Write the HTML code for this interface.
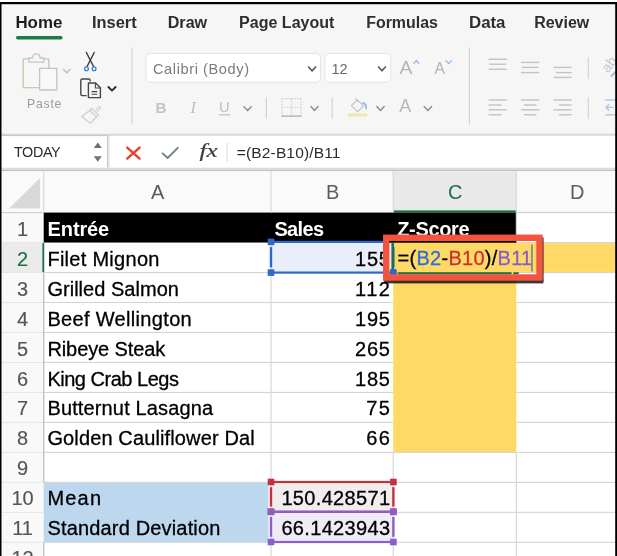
<!DOCTYPE html>
<html lang="en"><head><meta charset="utf-8"><title>Excel Z-Score</title>
<style>
html,body{margin:0;padding:0;background:#fff;}
body{width:617px;height:556px;overflow:hidden;position:relative;font-family:"Liberation Sans",sans-serif;}
svg{position:absolute;left:0;top:0;display:block;will-change:transform;}
text{font-family:"Liberation Sans",sans-serif;}
.cell{font-size:20px;fill:#000;stroke:#000;stroke-width:0.3px;}
.hdr{font-size:20px;fill:#5c5c5c;text-anchor:middle;}
.tab{font-size:15.6px;font-weight:700;fill:#2a2a2a;}
.serif{font-family:"Liberation Serif",serif;}
</style></head><body>
<svg width="617" height="556" viewBox="0 0 617 556">
<defs><filter id="sh" x="-10%" y="-20%" width="120%" height="150%"><feGaussianBlur stdDeviation="0.7"/></filter>
<filter id="soft" filterUnits="userSpaceOnUse" x="-10" y="-10" width="637" height="576"><feGaussianBlur stdDeviation="0.32"/></filter></defs>
<g filter="url(#soft)">
<rect x="-8" y="-8" width="633" height="572" fill="#fff"/>
<rect x="0" y="4" width="617" height="130" fill="#f6f6f6"/>
<rect x="0" y="133.7" width="617" height="2.3" fill="#dbdad8"/>
<rect x="0" y="135.8" width="617" height="32" fill="#fff"/>
<rect x="0" y="167.7" width="617" height="2.2" fill="#dcdcdc"/>
<rect x="0" y="169.9" width="617" height="1.5" fill="#c2c2c2"/>
<rect x="0" y="171.2" width="617" height="41.35000000000002" fill="#fafafa"/>
<rect x="0" y="212.55" width="43.7" height="343.45" fill="#f9f9f9"/>
<rect x="393.2" y="171.2" width="123.09999999999997" height="41.35000000000002" fill="#e9e9e9"/>
<rect x="393.2" y="210.4" width="123.09999999999997" height="2.2" fill="#1e7145"/>
<rect x="0" y="242.53" width="43.7" height="29.98" fill="#ebebeb"/>
<rect x="42.4" y="242.53" width="1.8" height="29.98" fill="#1e7145"/>
<rect x="43.7" y="212.55" width="472.59999999999997" height="29.98" fill="#000"/>
<rect x="393.2" y="242.53" width="123.09999999999997" height="209.86" fill="#ffd966"/>
<rect x="393.2" y="243.13" width="223.8" height="28.78" fill="#ffd966"/>
<rect x="43.7" y="482.37" width="224.8" height="59.96" fill="#bdd7ee"/>
<rect x="271.0" y="242.53" width="122.19999999999999" height="29.98" fill="#e9effa"/>
<rect x="271.0" y="482.37" width="122.19999999999999" height="29.98" fill="#f1eded"/>
<rect x="271.0" y="512.35" width="122.19999999999999" height="29.98" fill="#efecf5"/>
<rect x="43.1" y="171.2" width="1.2" height="41.35000000000002" fill="#dadada"/>
<rect x="270.4" y="171.2" width="1.2" height="41.35000000000002" fill="#dadada"/>
<rect x="392.59999999999997" y="171.2" width="1.2" height="41.35000000000002" fill="#dadada"/>
<rect x="515.6999999999999" y="171.2" width="1.2" height="41.35000000000002" fill="#dadada"/>
<rect x="0" y="212.05" width="43.7" height="1" fill="#e6e6e6"/>
<rect x="0" y="242.03" width="43.7" height="1" fill="#e6e6e6"/>
<rect x="0" y="272.01" width="43.7" height="1" fill="#e6e6e6"/>
<rect x="0" y="301.99" width="43.7" height="1" fill="#e6e6e6"/>
<rect x="0" y="331.97" width="43.7" height="1" fill="#e6e6e6"/>
<rect x="0" y="361.95000000000005" width="43.7" height="1" fill="#e6e6e6"/>
<rect x="0" y="391.93" width="43.7" height="1" fill="#e6e6e6"/>
<rect x="0" y="421.91" width="43.7" height="1" fill="#e6e6e6"/>
<rect x="0" y="451.89" width="43.7" height="1" fill="#e6e6e6"/>
<rect x="0" y="481.87" width="43.7" height="1" fill="#e6e6e6"/>
<rect x="0" y="511.85" width="43.7" height="1" fill="#e6e6e6"/>
<rect x="0" y="541.83" width="43.7" height="1" fill="#e6e6e6"/>
<rect x="0" y="211.95000000000002" width="43.7" height="1.2" fill="#d0d0d0"/>
<rect x="516.3" y="211.95000000000002" width="100.70000000000005" height="1.2" fill="#d0d0d0"/>
<rect x="43.7" y="271.96" width="349.5" height="1.1" fill="#d4d4d4"/>
<rect x="516.3" y="271.96" width="100.70000000000005" height="1.1" fill="#d4d4d4"/>
<rect x="43.7" y="301.94" width="349.5" height="1.1" fill="#d4d4d4"/>
<rect x="516.3" y="301.94" width="100.70000000000005" height="1.1" fill="#d4d4d4"/>
<rect x="43.7" y="331.92" width="349.5" height="1.1" fill="#d4d4d4"/>
<rect x="516.3" y="331.92" width="100.70000000000005" height="1.1" fill="#d4d4d4"/>
<rect x="43.7" y="361.90000000000003" width="349.5" height="1.1" fill="#d4d4d4"/>
<rect x="516.3" y="361.90000000000003" width="100.70000000000005" height="1.1" fill="#d4d4d4"/>
<rect x="43.7" y="391.88" width="349.5" height="1.1" fill="#d4d4d4"/>
<rect x="516.3" y="391.88" width="100.70000000000005" height="1.1" fill="#d4d4d4"/>
<rect x="43.7" y="421.86" width="349.5" height="1.1" fill="#d4d4d4"/>
<rect x="516.3" y="421.86" width="100.70000000000005" height="1.1" fill="#d4d4d4"/>
<rect x="43.7" y="451.84" width="349.5" height="1.1" fill="#d4d4d4"/>
<rect x="393.2" y="451.84" width="123.09999999999997" height="1.1" fill="#d4d4d4"/>
<rect x="516.3" y="451.84" width="100.70000000000005" height="1.1" fill="#d4d4d4"/>
<rect x="43.7" y="481.82" width="349.5" height="1.1" fill="#d4d4d4"/>
<rect x="393.2" y="481.82" width="123.09999999999997" height="1.1" fill="#d4d4d4"/>
<rect x="516.3" y="481.82" width="100.70000000000005" height="1.1" fill="#d4d4d4"/>
<rect x="271.0" y="511.8" width="122.19999999999999" height="1.1" fill="#d4d4d4"/>
<rect x="393.2" y="511.8" width="123.09999999999997" height="1.1" fill="#d4d4d4"/>
<rect x="516.3" y="511.8" width="100.70000000000005" height="1.1" fill="#d4d4d4"/>
<rect x="43.7" y="541.7800000000001" width="349.5" height="1.1" fill="#d4d4d4"/>
<rect x="393.2" y="541.7800000000001" width="123.09999999999997" height="1.1" fill="#d4d4d4"/>
<rect x="516.3" y="541.7800000000001" width="100.70000000000005" height="1.1" fill="#d4d4d4"/>
<rect x="516.3" y="241.98" width="100.70000000000005" height="1.1" fill="#d4d4d4"/>
<rect x="43.0" y="272.51" width="1.4" height="209.86" fill="#c2c2c2"/>
<rect x="43.0" y="542.33" width="1.4" height="20" fill="#c2c2c2"/>
<rect x="270.45" y="242.53" width="1.1" height="329.78" fill="#d4d4d4"/>
<rect x="392.65" y="452.39" width="1.1" height="119.91999999999996" fill="#d4d4d4"/>
<rect x="515.75" y="212.55" width="1.1" height="29.97999999999999" fill="#d4d4d4"/>
<rect x="515.75" y="452.39" width="1.1" height="119.91999999999996" fill="#d4d4d4"/>
<text class="tab" x="15.4" y="28.2" textLength="47.0" lengthAdjust="spacingAndGlyphs" style="fill:#1f1f1f">Home</text>
<text class="tab" x="92.0" y="28.2" textLength="44.699999999999996" lengthAdjust="spacingAndGlyphs" style="fill:#2e2e2e">Insert</text>
<text class="tab" x="167.70000000000002" y="28.2" textLength="39.49999999999998" lengthAdjust="spacingAndGlyphs" style="fill:#2e2e2e">Draw</text>
<text class="tab" x="239.1" y="28.2" textLength="95.29999999999998" lengthAdjust="spacingAndGlyphs" style="fill:#2e2e2e">Page Layout</text>
<text class="tab" x="366.2" y="28.2" textLength="71.69999999999996" lengthAdjust="spacingAndGlyphs" style="fill:#2e2e2e">Formulas</text>
<text class="tab" x="469.0" y="28.2" textLength="36.49999999999998" lengthAdjust="spacingAndGlyphs" style="fill:#2e2e2e">Data</text>
<text class="tab" x="534.1999999999999" y="28.2" textLength="55.1" lengthAdjust="spacingAndGlyphs" style="fill:#2e2e2e">Review</text>
<rect x="16" y="36" width="46.6" height="3.6" rx="1.8" fill="#1f7a48"/>
<g fill="none" stroke="#c4c4c4" stroke-width="1.3" stroke-linejoin="round">
<path d="M28.6 58.8 H23.2 V87.6 H39.4"/>
<path d="M44 58.8 H48.8 V68"/>
<path d="M28.8 62.2 V58 H32.6 C32.6 52.6 40 52.6 40 58 H43.8 V62.2 Z"/>
<rect x="39.6" y="68.4" width="17.2" height="21.6" fill="#f8f8f8"/>
</g>
<path d="M23.2 62 V87.6 H37" fill="none" stroke="#f3d46a" stroke-width="1.2" stroke-dasharray="1.2 2.6" opacity="0.9"/>
<path d="M63.6 69.4 L66.8 72.8 L70 69.4" fill="none" stroke="#bdbdbd" stroke-width="1.4" stroke-linecap="round" stroke-linejoin="round"/>
<text x="27" y="108" font-size="12.2" fill="#9b9b9b" textLength="34.4" lengthAdjust="spacing">Paste</text>
<g fill="none" stroke="#3c3c3c" stroke-width="1.3" stroke-linecap="round"><path d="M86.3 52.4 L93.6 66.6"/><path d="M94.3 52.4 L87 66.6"/></g>
<g fill="none" stroke="#3b7ddd" stroke-width="1.3"><circle cx="86.5" cy="68.7" r="1.9"/><circle cx="94.1" cy="68.7" r="1.9"/></g>
<g fill="none" stroke="#454545" stroke-width="1.4" stroke-linejoin="round">
<path d="M86.6 95.6 H82.4 Q80.8 95.6 80.8 94 V80.6 Q80.8 79 82.4 79 H88.6 Q90.2 79 90.2 80.6 V81.4"/>
<path d="M88.4 83 H95.6 L100.4 87.8 V97.6 H88.4 Z" fill="#f5f5f5"/>
<path d="M95.4 83.2 V88 H100.2" stroke-width="1.1"/>
<path d="M91.6 91.6 H97.2 M91.6 94.2 H97.2" stroke-width="1.1"/>
</g>
<path d="M108.4 87 L112 90.6 L115.6 87" fill="none" stroke="#2e2e2e" stroke-width="1.9" stroke-linecap="round" stroke-linejoin="round"/>
<g fill="none" stroke="#cfcfcf" stroke-width="1.2" stroke-linejoin="round">
<path d="M95.6 110.2 L99.2 106.4 L100.6 107.8 L97 111.6"/>
<path d="M91.4 108.4 L98.4 115 L96.6 117 L89.6 110.4 Z"/>
<path d="M89.6 110.6 L81.6 116.4 L90.4 123.2 L96.4 117"/>
</g>
<circle cx="83.2" cy="117" r="0.8" fill="#f3d46a"/><circle cx="93" cy="119.6" r="0.8" fill="#f3d46a"/>
<rect x="131.5" y="47.5" width="1.2" height="77" fill="#d4d4d4"/>
<rect x="468.8" y="47.5" width="1.2" height="77" fill="#d4d4d4"/>
<rect x="265.8" y="97.4" width="1.2" height="21.4" fill="#d4d4d4"/>
<rect x="331.6" y="97.8" width="1.2" height="20.8" fill="#d4d4d4"/>
<rect x="587.7" y="57.2" width="1.2" height="22" fill="#d4d4d4"/>
<rect x="587.7" y="97.2" width="1.2" height="22" fill="#d4d4d4"/>
<rect x="146" y="53.4" width="174.6" height="28.8" rx="4.5" fill="#fff" stroke="#e3e3e3" stroke-width="1"/>
<rect x="324.8" y="53.4" width="66" height="28.8" rx="4.5" fill="#fff" stroke="#e3e3e3" stroke-width="1"/>
<text x="153" y="74" font-size="14.6" fill="#7b7b7b" textLength="96" lengthAdjust="spacing">Calibri (Body)</text>
<text x="331.6" y="74" font-size="14.6" fill="#6a6a6a" textLength="16" lengthAdjust="spacing">12</text>
<path d="M308.6 67 L312.1 70.8 L315.6 67" fill="none" stroke="#5f5f5f" stroke-width="1.7" stroke-linecap="round" stroke-linejoin="round"/>
<path d="M378.6 67 L382.0 70.8 L385.4 67" fill="none" stroke="#5f5f5f" stroke-width="1.7" stroke-linecap="round" stroke-linejoin="round"/>
<text x="399.6" y="73.9" font-size="19.2" fill="#b3b3b3">A</text>
<text x="434.4" y="73.9" font-size="15.6" fill="#b3b3b3">A</text>
<path d="M414 63.4 L416.4 60.4 L418.8 63.4" fill="none" stroke="#8cb8ee" stroke-width="1.3" stroke-linecap="round" stroke-linejoin="round"/>
<path d="M446 60.6 L448.7 63.6 L451.4 60.6" fill="none" stroke="#8cb8ee" stroke-width="1.3" stroke-linecap="round" stroke-linejoin="round"/>
<text x="155.6" y="112.7" font-size="15.2" font-weight="700" fill="#c2c2c2">B</text>
<text class="serif" x="190.4" y="112.7" font-size="16" font-style="italic" fill="#bdbdbd">I</text>
<text x="219" y="112.2" font-size="14.6" fill="#bdbdbd">U</text>
<rect x="219.2" y="114.2" width="11" height="1.2" fill="#bdbdbd"/>
<path d="M244 106.8 L247.6 110.6 L251.2 106.8" fill="none" stroke="#8f8f8f" stroke-width="1.5" stroke-linecap="round" stroke-linejoin="round"/>
<g fill="none" stroke="#c6c6c6" stroke-width="1.1" stroke-dasharray="1.1 1.5">
<path d="M282 98.6 H301 M282 98.6 V116 M301 98.6 V116 M291.5 98.6 V116 M282 107.2 H301"/>
</g>
<rect x="281.4" y="115.4" width="20.2" height="1.5" fill="#b9b9b9"/>
<path d="M311 106.6 L314.5 110.4 L318 106.6" fill="none" stroke="#8f8f8f" stroke-width="1.5" stroke-linecap="round" stroke-linejoin="round"/>
<g fill="none" stroke="#c2c2c2" stroke-width="1.2" stroke-linejoin="round">
<path d="M357.4 99.8 L363.6 106 L357.6 111.6 L351.4 105.6 Z"/>
<path d="M355.2 98.6 L358.6 102"/>
</g>
<path d="M363 103 C365.6 103.6 366.4 106 366 108.6" fill="none" stroke="#7fb0ea" stroke-width="1.5" stroke-linecap="round"/>
<path d="M348.4 115 H367.6" stroke="#f3d46a" stroke-width="3" stroke-dasharray="1.6 0.8" opacity="0.75" fill="none"/>
<path d="M376.8 106.6 L380.5 110.4 L384.2 106.6" fill="none" stroke="#8f8f8f" stroke-width="1.5" stroke-linecap="round" stroke-linejoin="round"/>
<text x="399.2" y="111.8" font-size="18" fill="#b9b9b9">A</text>
<path d="M424.2 106.6 L427.9 110.4 L431.6 106.6" fill="none" stroke="#8f8f8f" stroke-width="1.5" stroke-linecap="round" stroke-linejoin="round"/>
<rect x="488.6" y="58.5" width="18.19999999999999" height="1.4" fill="#c3c3c3"/>
<rect x="489.4" y="63.5" width="16.600000000000023" height="1.4" fill="#c3c3c3"/>
<rect x="488.6" y="68.5" width="18.19999999999999" height="1.4" fill="#c3c3c3"/>
<rect x="521" y="61.699999999999996" width="18.399999999999977" height="1.4" fill="#c3c3c3"/>
<rect x="522" y="66.7" width="16.399999999999977" height="1.4" fill="#c3c3c3"/>
<rect x="521" y="71.89999999999999" width="18.399999999999977" height="1.4" fill="#c3c3c3"/>
<rect x="553.6" y="66.7" width="18.0" height="1.4" fill="#c3c3c3"/>
<rect x="556" y="71.89999999999999" width="15.600000000000023" height="1.4" fill="#c3c3c3"/>
<rect x="553.6" y="76.7" width="18.0" height="1.4" fill="#c3c3c3"/>
<rect x="488.6" y="99.3" width="18.19999999999999" height="1.4" fill="#c3c3c3"/>
<rect x="488.6" y="104.3" width="13.0" height="1.4" fill="#c3c3c3"/>
<rect x="488.6" y="109.1" width="18.19999999999999" height="1.4" fill="#c3c3c3"/>
<rect x="488.6" y="114.1" width="13.0" height="1.4" fill="#c3c3c3"/>
<rect x="521" y="99.3" width="18.399999999999977" height="1.4" fill="#c3c3c3"/>
<rect x="524" y="104.3" width="12.399999999999977" height="1.4" fill="#c3c3c3"/>
<rect x="521" y="109.1" width="18.399999999999977" height="1.4" fill="#c3c3c3"/>
<rect x="524" y="114.1" width="12.399999999999977" height="1.4" fill="#c3c3c3"/>
<rect x="553.6" y="99.3" width="18.0" height="1.4" fill="#c3c3c3"/>
<rect x="558.8" y="104.3" width="12.800000000000068" height="1.4" fill="#c3c3c3"/>
<rect x="553.6" y="109.1" width="18.0" height="1.4" fill="#c3c3c3"/>
<rect x="558.8" y="114.1" width="12.800000000000068" height="1.4" fill="#c3c3c3"/>
<text x="0" y="0" font-size="14" fill="#c6c6c6" transform="translate(608,73.5) rotate(-52)">ab</text>
<path d="M611 76.6 L616 71.2" stroke="#8cb8ee" stroke-width="1.6" fill="none"/>
<rect x="605.2" y="99.3" width="12" height="1.4" fill="#c3c3c3"/><rect x="605.2" y="114.1" width="12" height="1.4" fill="#c3c3c3"/>
<path d="M613 107.4 H606 M608.8 104.6 L606 107.4 L608.8 110.2" stroke="#a5c9f0" stroke-width="1.4" fill="none" stroke-linecap="round" stroke-linejoin="round"/>
<rect x="1.5" y="134.7" width="107.2" height="1.4" fill="#cbcbcb"/>
<rect x="106.9" y="135.8" width="1.8" height="32" fill="#cdcdcd"/>
<rect x="108.7" y="135.8" width="1.6" height="32" fill="#f0f0f0"/>
<text x="14" y="156.5" font-size="14.4" fill="#2b2b2b" textLength="46.6" lengthAdjust="spacing">TODAY</text>
<path d="M93.8 148 L97.8 142.4 L101.8 148 Z M93.8 156.2 L97.8 161.8 L101.8 156.2 Z" fill="#6f6f6f"/>
<path d="M127.2 147.6 L139.6 158.6 M139.6 147.6 L127.2 158.6" stroke="#e8412f" stroke-width="2.4" fill="none" stroke-linecap="round"/>
<path d="M162.6 153.4 L167.6 158 L177.8 147.8" stroke="#6b8577" stroke-width="1.8" fill="none" stroke-linecap="round" stroke-linejoin="round"/>
<text class="serif" x="199.6" y="157.2" font-size="19" font-style="italic" fill="#3a3a3a" stroke="#3a3a3a" stroke-width="0.2" textLength="18" lengthAdjust="spacingAndGlyphs">fx</text>
<rect x="226.4" y="143" width="1.2" height="18.4" fill="#dcdcdc"/>
<text x="236.8" y="158.3" font-size="15.5" fill="#2b2b2b" textLength="103.6" lengthAdjust="spacing">=(B2-B10)/B11</text>
<path d="M9 208.6 L40 208.6 L40 178 Z" fill="#d9d9d9"/>
<text class="hdr" x="157.6" y="199.2">A</text>
<text class="hdr" x="332.6" y="199.2">B</text>
<text class="hdr" x="577.2" y="199.2">D</text>
<text class="hdr" x="455.2" y="199.2" fill="#1e7145" style="fill:#1e7145">C</text>
<text x="22.6" y="235.60" font-size="20" text-anchor="middle" style="fill:#555;stroke:#555;stroke-width:0.15px">1</text>
<text x="22.6" y="265.58" font-size="20" text-anchor="middle" style="fill:#1e7145;stroke:#1e7145;stroke-width:0.15px">2</text>
<text x="22.6" y="295.56" font-size="20" text-anchor="middle" style="fill:#555;stroke:#555;stroke-width:0.15px">3</text>
<text x="22.6" y="325.54" font-size="20" text-anchor="middle" style="fill:#555;stroke:#555;stroke-width:0.15px">4</text>
<text x="22.6" y="355.52" font-size="20" text-anchor="middle" style="fill:#555;stroke:#555;stroke-width:0.15px">5</text>
<text x="22.6" y="385.50" font-size="20" text-anchor="middle" style="fill:#555;stroke:#555;stroke-width:0.15px">6</text>
<text x="22.6" y="415.48" font-size="20" text-anchor="middle" style="fill:#555;stroke:#555;stroke-width:0.15px">7</text>
<text x="22.6" y="445.46" font-size="20" text-anchor="middle" style="fill:#555;stroke:#555;stroke-width:0.15px">8</text>
<text x="22.6" y="475.44" font-size="20" text-anchor="middle" style="fill:#555;stroke:#555;stroke-width:0.15px">9</text>
<text x="22.6" y="505.42" font-size="20" text-anchor="middle" style="fill:#555;stroke:#555;stroke-width:0.15px">10</text>
<text x="22.6" y="535.40" font-size="20" text-anchor="middle" style="fill:#555;stroke:#555;stroke-width:0.15px">11</text>
<text x="22.6" y="565.38" font-size="20" text-anchor="middle" style="fill:#555;stroke:#555;stroke-width:0.15px">12</text>
<text class="cell" x="47.6" y="235.60" font-weight="700" style="fill:#fff;stroke:none" textLength="61.6" lengthAdjust="spacing">Entrée</text>
<text class="cell" x="274.4" y="235.60" font-weight="700" style="fill:#fff;stroke:none" textLength="49.6" lengthAdjust="spacing">Sales</text>
<text class="cell" x="397.2" y="235.60" font-weight="700" style="fill:#fff;stroke:none" textLength="72.4" lengthAdjust="spacing">Z-Score</text>
<text class="cell" x="47.4" y="265.58" textLength="112.0" lengthAdjust="spacing">Filet Mignon</text>
<text class="cell" x="47.4" y="295.56" textLength="131.5" lengthAdjust="spacing">Grilled Salmon</text>
<text class="cell" x="47.4" y="325.54" textLength="144.3" lengthAdjust="spacing">Beef Wellington</text>
<text class="cell" x="47.4" y="355.52" textLength="117.9" lengthAdjust="spacing">Ribeye Steak</text>
<text class="cell" x="47.4" y="385.50" textLength="131.5" lengthAdjust="spacing">King Crab Legs</text>
<text class="cell" x="47.4" y="415.48" textLength="165.7" lengthAdjust="spacing">Butternut Lasagna</text>
<text class="cell" x="47.4" y="445.46" textLength="207.3" lengthAdjust="spacing">Golden Cauliflower Dal</text>
<text class="cell" x="47.4" y="505.42" textLength="53.6" lengthAdjust="spacing">Mean</text>
<text class="cell" x="47.4" y="535.40" textLength="173" lengthAdjust="spacing">Standard Deviation</text>
<text class="cell" x="355.1" y="265.58" textLength="34.8" lengthAdjust="spacing">155</text>
<text class="cell" x="355.1" y="295.56" textLength="34.8" lengthAdjust="spacing">112</text>
<text class="cell" x="355.1" y="325.54" textLength="34.8" lengthAdjust="spacing">195</text>
<text class="cell" x="355.1" y="355.52" textLength="34.8" lengthAdjust="spacing">265</text>
<text class="cell" x="355.1" y="385.50" textLength="34.8" lengthAdjust="spacing">185</text>
<text class="cell" x="366.3" y="415.48" textLength="23.5" lengthAdjust="spacing">75</text>
<text class="cell" x="366.3" y="445.46" textLength="23.5" lengthAdjust="spacing">66</text>
<text class="cell" x="281.4" y="505.42" textLength="108.6" lengthAdjust="spacing">150.428571</text>
<text class="cell" x="281.4" y="535.40" textLength="108.6" lengthAdjust="spacing">66.1423943</text>
<g fill="#2f68cc">
<rect x="274.0" y="240.8" width="116.39999999999998" height="2.2"/>
<rect x="274.0" y="271.5" width="116.39999999999998" height="2.2"/>
<rect x="269.8" y="247.1" width="2.4" height="20.30000000000002"/>
<rect x="392.2" y="247.1" width="2.4" height="20.30000000000002"/>
<rect x="267.7" y="238.6" width="6.6" height="6.6"/>
<rect x="267.7" y="269.3" width="6.6" height="6.6"/>
<rect x="390.09999999999997" y="269.3" width="6.6" height="6.6"/>
</g>
<g fill="#c5303c">
<rect x="274.0" y="480.9" width="116.39999999999998" height="2.2"/>
<rect x="274.0" y="510.7" width="116.39999999999998" height="2.2"/>
<rect x="269.8" y="487.2" width="2.4" height="19.400000000000013"/>
<rect x="392.2" y="487.2" width="2.4" height="19.400000000000013"/>
<rect x="267.7" y="478.7" width="6.6" height="6.6"/>
<rect x="390.09999999999997" y="478.7" width="6.6" height="6.6"/>
<rect x="267.7" y="508.5" width="6.6" height="6.6"/>
<rect x="390.09999999999997" y="508.5" width="6.6" height="6.6"/>
</g>
<g fill="#8b5fc9">
<rect x="274.0" y="510.7" width="116.39999999999998" height="2.2"/>
<rect x="274.0" y="540.9" width="116.39999999999998" height="2.2"/>
<rect x="269.8" y="517.0" width="2.4" height="19.79999999999999"/>
<rect x="392.2" y="517.0" width="2.4" height="19.79999999999999"/>
<rect x="267.7" y="508.5" width="6.6" height="6.6"/>
<rect x="390.09999999999997" y="508.5" width="6.6" height="6.6"/>
<rect x="267.7" y="538.7" width="6.6" height="6.6"/>
<rect x="390.09999999999997" y="538.7" width="6.6" height="6.6"/>
</g>
<rect x="386" y="239.53" width="130.29999999999995" height="3.1" fill="#000"/>
<rect x="391.4" y="242.33" width="2.6" height="31.78" fill="#1e7145"/>
<rect x="397.6" y="272.2" width="114" height="2.2" fill="#1e7145"/><rect x="513.4" y="272.2" width="5.4" height="2.2" fill="#1e7145"/>
<rect x="390.2" y="269.2" width="5.8" height="5.2" fill="#2f68cc"/>
<text class="cell" x="397.6" y="264.78" textLength="134.6" lengthAdjust="spacing">=(<tspan style="fill:#2f6fd8;stroke:#2f6fd8">B2</tspan>-<tspan style="fill:#cf2f33;stroke:#cf2f33">B10</tspan>)/<tspan style="fill:#8760c4;stroke:#8760c4">B11</tspan></text>
<rect x="531.3" y="244.6" width="1.3" height="27" fill="#4f73ad"/>
<g filter="url(#sh)" fill="#000" opacity="0.78"><rect x="384.2" y="279.5" width="159.2" height="3.9"/><rect x="541" y="237.5" width="2.6" height="44"/></g>
<rect x="386.2" y="237.8" width="153.3" height="39.7" fill="none" stroke="#f4523f" stroke-width="6.4"/>
<rect x="-8" y="2" width="633" height="2.2" fill="#000"/>
<rect x="-8" y="2" width="9.5" height="562" fill="#000"/>
<rect x="615.2" y="2" width="9.8" height="562" fill="#000"/>
</g>
</svg></body></html>
